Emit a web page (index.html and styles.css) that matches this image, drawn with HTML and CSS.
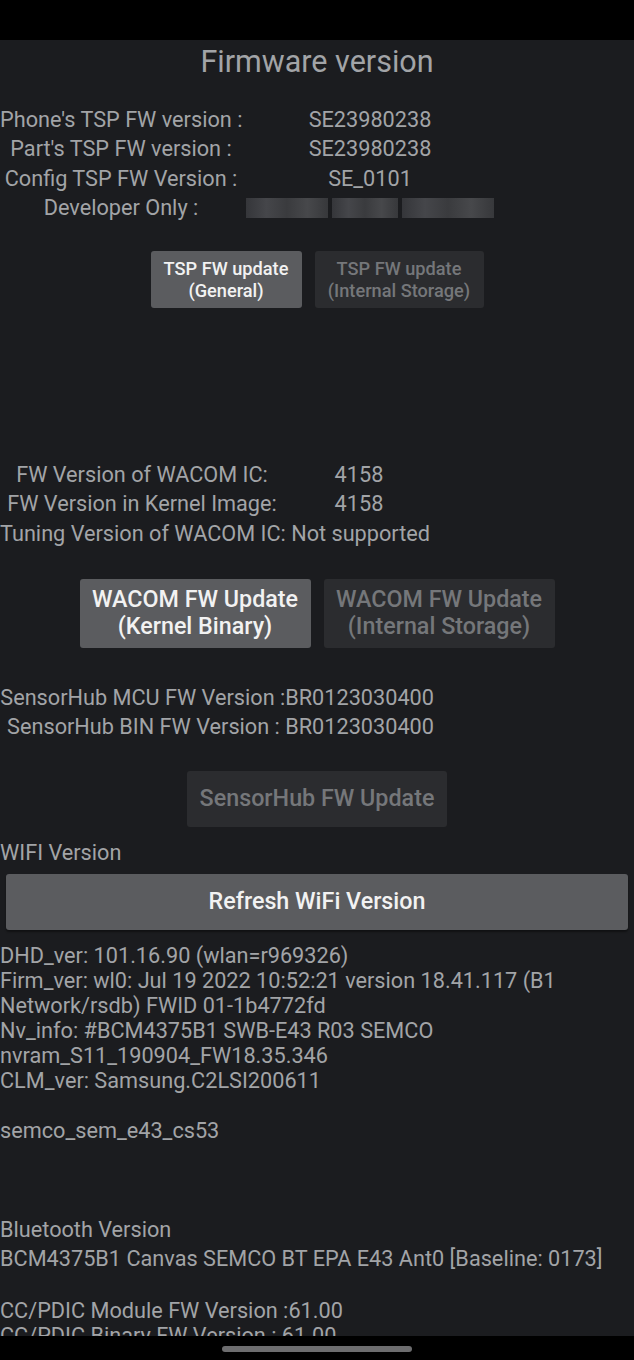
FILE: index.html
```html
<!DOCTYPE html>
<html lang="en">
<head>
    <meta charset="UTF-8">
    <meta name="viewport" content="width=device-width, initial-scale=1.0">
    <title>Firmware version</title>
    <link rel="stylesheet" href="styles.css">
</head>
<body>
    <div class="status-bar"></div>

    <main class="screen">
        <h1 class="title">Firmware version</h1>

        <!-- TSP -->
        <div class="info-grid tsp">
            <span>Phone's TSP FW version :</span><span>SE23980238</span>
            <span>Part's TSP FW version :</span><span>SE23980238</span>
            <span>Config TSP FW Version :</span><span>SE_0101</span>
            <span>Developer Only :</span><span class="blurred"><i></i><i></i><i></i></span>
        </div>

        <div class="btn-row tsp-btns">
            <button class="btn">TSP FW update<br>(General)</button>
            <button class="btn off">TSP FW update<br>(Internal Storage)</button>
        </div>

        <!-- WACOM -->
        <div class="info-grid wacom">
            <span>FW Version of WACOM IC:</span><span>4158</span>
            <span>FW Version in Kernel Image:</span><span>4158</span>
        </div>
        <p class="line">Tuning Version of WACOM IC: Not supported</p>

        <div class="btn-row wacom-btns">
            <button class="btn big">WACOM FW Update<br>(Kernel Binary)</button>
            <button class="btn big off">WACOM FW Update<br>(Internal Storage)</button>
        </div>

        <!-- SensorHub -->
        <div class="sensorhub">
            <p>SensorHub MCU FW Version :BR0123030400</p>
            <p>SensorHub BIN FW Version : BR0123030400</p>
        </div>

        <div class="btn-row hub-btn">
            <button class="btn big off">SensorHub FW Update</button>
        </div>

        <!-- WiFi -->
        <p class="section-label">WIFI Version</p>
        <button class="btn big wide">Refresh WiFi Version</button>

        <div class="wifi-info">
            DHD_ver: 101.16.90 (wlan=r969326)<br>
            Firm_ver: wl0: Jul 19 2022 10:52:21 version 18.41.117 (B1<br>
            Network/rsdb) FWID 01-1b4772fd<br>
            Nv_info: #BCM4375B1 SWB-E43 R03 SEMCO<br>
            nvram_S11_190904_FW18.35.346<br>
            CLM_ver: Samsung.C2LSI200611<br>
            <br>
            semco_sem_e43_cs53
        </div>

        <!-- Bluetooth -->
        <div class="bt-info">
            <p>Bluetooth Version</p>
            <p>BCM4375B1 Canvas SEMCO BT EPA E43 Ant0 [Baseline: 0173]</p>
        </div>

        <div class="pdic-info">
            <p>CC/PDIC Module FW Version :61.00</p>
            <p>CC/PDIC Binary FW Version : 61.00</p>
        </div>
    </main>

    <div class="nav-bar"><span class="handle"></span></div>
</body>
</html>
```

FILE: styles.css
```css
:root {
    --bg: #1b1c1f;
    --text: #a2a4a7;
    --btn: #5b5c5f;
    --btn-off: #2b2c2f;
    --btn-off-text: #75777a;
}
body {
    margin: 0;
    background: #000;
    font-family: Roboto, "Liberation Sans", sans-serif;
    color: var(--text);
}
p {
    margin: 0;
}
.status-bar {
    height: 40px;
    background: #000;
}
.screen {
    height: 1296px;
    overflow: hidden;
    background: var(--bg);
    font-size: 21.7px;
    white-space: nowrap;
}
.title {
    margin: 0;
    font-size: 30.5px;
    font-weight: normal;
    line-height: 44px;
    text-align: center;
}
.info-grid {
    display: grid;
    text-align: center;
    line-height: 29.3px;
}
.tsp {
    grid-template-columns: 242px 256px;
    margin-top: 21px;
}
.blurred {
    display: flex;
    align-items: center;
    justify-content: center;
    gap: 4px;
}
.blurred i {
    display: block;
    height: 20px;
    width: 82px;
    background: linear-gradient(90deg, #35363a, #45464a 25%, #3a3b3e 50%, #47484b 75%, #37383b);
}
.blurred i:nth-child(2) {
    width: 66px;
}
.blurred i:nth-child(3) {
    width: 92px;
}
.btn-row {
    display: flex;
    justify-content: center;
    gap: 13px;
}
.btn {
    display: flex;
    align-items: center;
    justify-content: center;
    border: none;
    border-radius: 3px;
    background: var(--btn);
    color: #f2f2f2;
    font-family: inherit;
    font-weight: 500;
    text-align: center;
    padding: 0 8px;
}
.btn.off {
    background: var(--btn-off);
    color: var(--btn-off-text);
}
.tsp-btns {
    margin-top: 29px;
}
.tsp-btns .btn {
    height: 57px;
    font-size: 18.2px;
    line-height: 22px;
}
.tsp-btns .btn:first-child {
    width: 151px;
}
.tsp-btns .btn:last-child {
    width: 169px;
}
.wacom {
    grid-template-columns: 284px 150px;
    margin-top: 152px;
}
.line {
    line-height: 29px;
}
.btn.big {
    font-size: 23.3px;
    line-height: 27px;
}
.wacom-btns {
    margin-top: 31px;
}
.wacom-btns .btn {
    width: 231px;
    height: 69px;
}
.sensorhub {
    width: 434px;
    margin-top: 35px;
    text-align: right;
    line-height: 29px;
}
.hub-btn {
    margin-top: 30px;
}
.hub-btn .btn {
    width: 260px;
    height: 56px;
}
.section-label {
    margin-top: 13px;
    line-height: 25px;
}
.btn.wide {
    width: 622px;
    height: 56px;
    margin: 9px 6px 0;
    box-shadow: 0 2px 2px rgba(0, 0, 0, 0.4);
}
.wifi-info {
    margin-top: 13px;
    line-height: 25px;
}
.bt-info {
    margin-top: 72px;
    line-height: 29px;
}
.pdic-info {
    margin-top: 25px;
    line-height: 25px;
}
.nav-bar {
    height: 24px;
    background: #000;
    display: flex;
    justify-content: center;
    padding-top: 10px;
    box-sizing: border-box;
}
.handle {
    width: 190px;
    height: 6px;
    border-radius: 3px;
    background: #6d6d6f;
}
```
